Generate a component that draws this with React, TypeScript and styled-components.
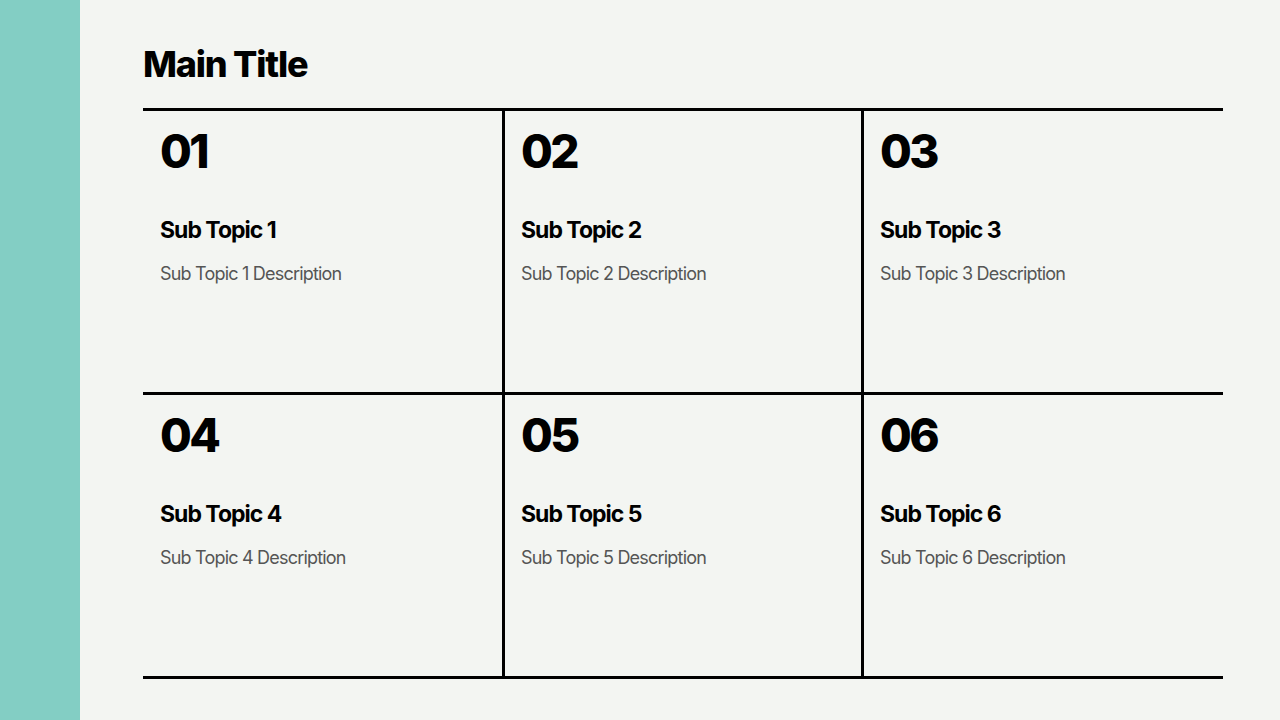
import styled, { createGlobalStyle } from 'styled-components';

const GlobalStyle = createGlobalStyle`
  html, body {
    margin: 0;
    padding: 0;
    background: #f3f5f2;
    font-family: Inter, 'Noto Sans', sans-serif;
  }
`;

const topics = [1, 2, 3, 4, 5, 6];

export default function App() {
  return (
    <>
      <GlobalStyle />
      <Page>
        <Sidebar />
        <Main>
          <Title>Main Title</Title>
          <Grid>
            {topics.map((n, i) => (
              <Cell key={n} $col={i % 3} $row={Math.floor(i / 3)}>
                <Num>0{n}</Num>
                <SubTitle>Sub Topic {n}</SubTitle>
                <Desc>Sub Topic {n} Description</Desc>
              </Cell>
            ))}
          </Grid>
        </Main>
      </Page>
    </>
  );
}

const Page = styled.div`
  display: flex;
  width: 1280px;
  height: 720px;
  overflow: hidden;
  background: #f3f5f2;
`;

const Sidebar = styled.div`
  width: 80px;
  flex-shrink: 0;
  background: #83cec4;
`;

const Main = styled.div`
  flex: 1;
  padding: 43px 57px 0 63px;
`;

const Title = styled.h1`
  margin: 0 0 23px;
  font-size: 36px;
  line-height: 42px;
  font-weight: 800;
  letter-spacing: -1.2px;
  color: #000;
`;

const Grid = styled.div`
  display: grid;
  grid-template-columns: 360px 359px 361px;
  grid-template-rows: 281px 284px;
  border-top: 3px solid #000;
  border-bottom: 3px solid #000;
`;

const Cell = styled.div<{ $col: number; $row: number }>`
  display: flex;
  flex-direction: column;
  padding: 14px 17px 0 ${(p) => (p.$col === 0 ? 17 : 16)}px;
  border-left: ${(p) => (p.$col === 0 ? 'none' : '3px solid #000')};
  border-top: ${(p) => (p.$row === 0 ? 'none' : '3px solid #000')};
  margin-left: ${(p) => (p.$col === 0 ? 0 : -1)}px;
  margin-bottom: ${(p) => (p.$row === 1 ? -3 : 0)}px;
`;

const Num = styled.div`
  font-size: 46px;
  line-height: 52px;
  font-weight: 800;
  letter-spacing: -2.5px;
  color: #000;
`;

const SubTitle = styled.div`
  margin-top: 39px;
  font-size: 23px;
  line-height: 28px;
  font-weight: 700;
  letter-spacing: -1px;
  color: #000;
`;

const Desc = styled.div`
  margin-top: 19px;
  font-size: 18px;
  line-height: 22px;
  font-weight: 400;
  letter-spacing: -0.8px;
  color: #555;
`;
